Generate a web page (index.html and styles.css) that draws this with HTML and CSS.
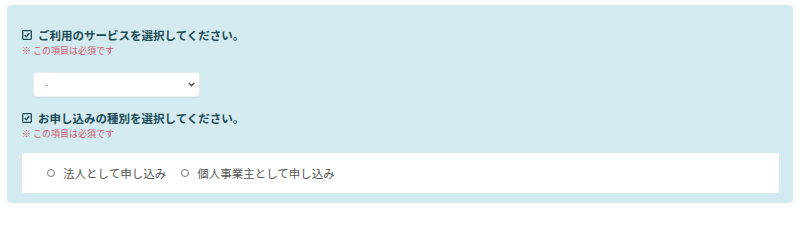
FILE: index.html
```html
<!DOCTYPE html>
<html lang="ja">
<head>
<meta charset="utf-8">
<title>フォーム</title>
<link rel="stylesheet" href="styles.css">
</head>
<body>
<div class="panel">
  <div class="q-title">
    <svg class="chk" width="10" height="10" viewBox="0 0 10 10"><rect x="0.7" y="0.7" width="8.6" height="8.6" rx="0.8" fill="none" stroke="#1d4a55" stroke-width="1.3"/><path d="M2.6 5 L4.3 6.7 L7.4 3.3" fill="none" stroke="#1d4a55" stroke-width="1.3"/></svg>
    <span>ご利用のサービスを選択してください。</span>
  </div>
  <div class="req">※ この項目は必須です</div>
  <div class="select-wrap">
    <select class="select"><option>-</option></select>
    <svg class="chev" width="7" height="5" viewBox="0 0 7 5"><path d="M0.8 1 L3.5 3.7 L6.2 1" fill="none" stroke="#444" stroke-width="1.4"/></svg>
  </div>
  <div class="q-title q2">
    <svg class="chk" width="10" height="10" viewBox="0 0 10 10"><rect x="0.7" y="0.7" width="8.6" height="8.6" rx="0.8" fill="none" stroke="#1d4a55" stroke-width="1.3"/><path d="M2.6 5 L4.3 6.7 L7.4 3.3" fill="none" stroke="#1d4a55" stroke-width="1.3"/></svg>
    <span>お申し込みの種別を選択してください。</span>
  </div>
  <div class="req">※ この項目は必須です</div>
  <div class="radio-box">
    <label class="radio"><input type="radio" name="kind"><span>法人として申し込み</span></label>
    <label class="radio"><input type="radio" name="kind"><span>個人事業主として申し込み</span></label>
  </div>
</div>
</body>
</html>
```
FILE: styles.css
```css
html, body {
  margin: 0;
  padding: 0;
  background: #ffffff;
}
body {
  font-family: "Noto Sans CJK JP", "Noto Sans", sans-serif;
}
.panel {
  margin: 5px 7px 0 7px;
  width: 786px;
  height: 198px;
  box-sizing: border-box;
  background: #d2eaf0;
  border-radius: 4px;
  padding: 22px 14px 10px 15px;
}
.q-title {
  display: flex;
  align-items: center;
  gap: 6px;
  height: 16px;
  font-size: 11.5px;
  font-weight: 700;
  color: #1d4a55;
  line-height: 16px;
}
.chk {
  display: block;
  flex: none;
}
.req {
  margin-top: 2px;
  height: 12px;
  line-height: 12px;
  font-size: 9px;
  color: #cf5a72;
}
.select-wrap {
  position: relative;
  margin: 15px 0 0 11px;
  width: 167px;
  height: 25px;
}
.select {
  appearance: none;
  -webkit-appearance: none;
  display: block;
  width: 167px;
  height: 25px;
  margin: 0;
  border: 1px solid #e4eef1;
  border-radius: 3px;
  background: #ffffff;
  padding: 0 0 0 11px;
  font-family: inherit;
  font-size: 9px;
  color: #666;
  box-shadow: 0 1px 1px rgba(0,0,0,0.04);
}
.chev {
  position: absolute;
  right: 5px;
  top: 10px;
  pointer-events: none;
}
.q2 {
  margin-top: 13px;
}
.radio-box {
  margin-top: 13px;
  height: 40px;
  background: #ffffff;
  border-radius: 3px;
  display: flex;
  align-items: center;
  padding-left: 25px;
  gap: 15px;
  box-sizing: border-box;
}
.radio {
  display: flex;
  align-items: center;
  gap: 8px;
  font-size: 11.5px;
  color: #555;
  line-height: 16px;
}
.radio input {
  appearance: none;
  -webkit-appearance: none;
  width: 8px;
  height: 8px;
  margin: 0;
  border: 1px solid #777;
  border-radius: 50%;
  background: #fff;
  flex: none;
}
```
